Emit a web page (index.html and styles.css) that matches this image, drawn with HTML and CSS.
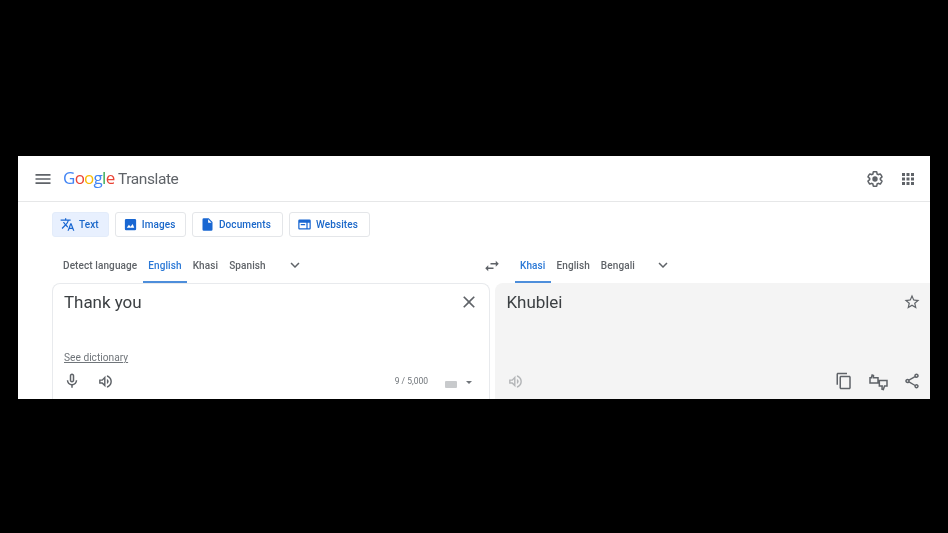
FILE: index.html
```html
<!DOCTYPE html>
<html lang="en">
<head>
<meta charset="utf-8">
<title>Google Translate</title>
<link rel="stylesheet" href="styles.css">
</head>
<body>
<main class="app">
  <header class="topbar">
    <svg class="ico menu" viewBox="0 0 24 24"><path d="M3 18h18v-2H3v2zm0-5h18v-2H3v2zm0-7v2h18V6H3z"/></svg>
    <div class="logo"><span class="g-blue">G</span><span class="g-red">o</span><span class="g-yellow">o</span><span class="g-blue">g</span><span class="g-green">l</span><span class="g-red">e</span><span class="product">Translate</span></div>
    <div class="top-actions">
      <svg class="ico gear" viewBox="0 0 24 24"><path class="gear-line" d="M19.14 12.94c.04-.3.06-.61.06-.94 0-.32-.02-.64-.07-.94l2.03-1.58c.18-.14.23-.41.12-.61l-1.92-3.32c-.12-.22-.37-.29-.59-.22l-2.39.96c-.5-.38-1.03-.7-1.62-.94l-.36-2.54c-.04-.24-.24-.41-.48-.41h-3.84c-.24 0-.43.17-.47.41l-.36 2.54c-.59.24-1.13.57-1.62.94l-2.39-.96c-.22-.08-.47 0-.59.22L2.74 8.870c-.12.21-.08.47.12.61l2.03 1.58c-.05.3-.09.63-.09.94s.02.64.07.94l-2.03 1.58c-.18.14-.23.41-.12.61l1.92 3.32c.12.22.37.29.59.22l2.39-.96c.5.38 1.03.7 1.62.94l.36 2.54c.05.24.24.41.48.41h3.84c.24 0 .44-.17.47-.41l.36-2.54c.59-.24 1.13-.56 1.62-.94l2.39.96c.22.08.47 0 .59-.22l1.92-3.32c.12-.22.07-.47-.12-.61l-2.010-1.58z"/><circle cx="12" cy="12" r="3.6"/></svg>
      <svg class="ico apps" viewBox="0 0 24 24"><path d="M4 8h4V4H4v4zm6 12h4v-4h-4v4zm-6 0h4v-4H4v4zm0-6h4v-4H4v4zm6 0h4v-4h-4v4zm6-10v4h4V4h-4zm-6 4h4V4h-4v4zm6 6h4v-4h-4v4zm0 6h4v-4h-4v4z"/></svg>
    </div>
  </header>

  <nav class="tabs">
    <button class="tab tab-active">
      <svg class="tab-ico" viewBox="0 0 24 24"><path d="M12.87 15.07l-2.54-2.51.03-.03c1.74-1.94 2.98-4.17 3.71-6.53H17V4h-7V2H8v2H1v1.99h11.17C11.5 7.92 10.44 9.75 9 11.35 8.07 10.32 7.3 9.19 6.69 8h-2c.73 1.63 1.73 3.17 2.98 4.56l-5.09 5.02L4 19l5-5 3.11 3.11.76-2.04zM18.5 10h-2L12 22h2l1.12-3h4.75L21 22h2l-4.5-12zm-2.62 7l1.62-4.33L19.12 17h-3.24z"/></svg>Text</button>
    <button class="tab">
      <svg class="tab-ico" viewBox="0 0 24 24"><path d="M19 3H5a2 2 0 0 0-2 2v14a2 2 0 0 0 2 2h14a2 2 0 0 0 2-2V5a2 2 0 0 0-2-2zM6 17l3.5-4.5 2.5 3 3.5-4.5 2.5 6H6z"/></svg>Images</button>
    <button class="tab tab-wide">
      <svg class="tab-ico" viewBox="0 0 24 24"><path d="M14 2H6a2 2 0 0 0-2 2v16a2 2 0 0 0 2 2h12a2 2 0 0 0 2-2V8l-6-6zm-1 7V3.500L18.500 9H13z"/></svg>Documents</button>
    <button class="tab tab-wide">
      <svg class="tab-ico" viewBox="0 0 24 24"><path d="M20 4H4a2 2 0 0 0-2 2v12a2 2 0 0 0 2 2h16a2 2 0 0 0 2-2V6a2 2 0 0 0-2-2zM4 18V9h11v9H4zm16 0h-3V9h3v9zM6 11h7v2H6z"/></svg>Websites</button>
  </nav>

  <section class="workspace">
    <div class="column col-source">
      <div class="langs">
        <span class="lang">Detect language</span>
        <span class="lang lang-active">English</span>
        <span class="lang">Khasi</span>
        <span class="lang">Spanish</span>
        <svg class="ico chev" viewBox="0 0 24 24"><path d="M7.41 8.59L12 13.17l4.59-4.58L18 10l-6 6-6-6z"/></svg>
      </div>
      <div class="panel panel-source">
        <div class="panel-top">
          <span class="big-text">Thank you</span>
          <svg class="ico close" viewBox="0 0 24 24"><path d="M19 6.41L17.59 5 12 10.59 6.41 5 5 6.41 10.59 12 5 17.59 6.41 19 12 13.41 17.59 19 19 17.59 13.41 12z"/></svg>
        </div>
        <a class="dict">See dictionary</a>
        <div class="panel-bottom">
          <svg class="ico mic" viewBox="0 0 24 24"><path d="M12 14c1.66 0 3-1.34 3-3V5c0-1.66-1.34-3-3-3S9 3.34 9 5v6c0 1.66 1.34 3 3 3zm-1-9c0-.55.45-1 1-1s1 .45 1 1v6c0 .55-.45 1-1 1s-1-.45-1-1V5zm6 6c0 2.76-2.24 5-5 5s-5-2.24-5-5H5c0 3.53 2.61 6.43 6 6.92V21h2v-3.08c3.39-.49 6-3.39 6-6.92h-2z"/></svg>
          <svg class="ico spk" viewBox="0 0 24 24"><path d="M3 9v6h4l5 5V4L7 9H3zm7-.17v6.34L7.83 13H5v-2h2.83L10 8.83zM14 8.500v7c1.48-.74 2.500-2.250 2.500-3.500S15.480 9.240 14 8.500zM14 3.230v2.060c2.890.86 5 3.540 5 6.710s-2.110 5.850-5 6.710v2.060c4-.91 7-4.490 7-8.770s-3-7.860-7-8.770z"/></svg>
          <span class="count">9 / 5,000</span>
          <span class="kbd"></span>
          <span class="caret"></span>
        </div>
      </div>
    </div>
    <div class="swap-col">
      <svg class="ico swap" viewBox="0 0 24 24"><path d="M6.99 11L3 15l3.99 4v-3H14v-2H6.99v-3zM21 9l-3.99-4v3H10v2h7.010v3L21 9z"/></svg>
    </div>
    <div class="column col-target">
      <div class="langs langs-target">
        <span class="lang lang-active">Khasi</span>
        <span class="lang">English</span>
        <span class="lang">Bengali</span>
        <svg class="ico chev" viewBox="0 0 24 24"><path d="M7.41 8.59L12 13.17l4.59-4.58L18 10l-6 6-6-6z"/></svg>
      </div>
      <div class="panel panel-target">
        <div class="panel-top">
          <span class="big-text">Khublei</span>
          <svg class="ico star" viewBox="0 0 24 24"><path d="M22 9.24l-7.19-.62L12 2 9.19 8.63 2 9.24l5.46 4.73L5.82 21 12 17.27 18.18 21l-1.63-7.03L22 9.24zM12 15.4l-3.76 2.27 1-4.28-3.32-2.88 4.38-.38L12 6.1l1.71 4.04 4.38.38-3.32 2.88 1 4.28L12 15.4z"/></svg>
        </div>
        <div class="panel-bottom bottom-target">
          <svg class="ico spk spk-off" viewBox="0 0 24 24"><path d="M3 9v6h4l5 5V4L7 9H3zm7-.17v6.34L7.83 13H5v-2h2.83L10 8.83zM14 8.500v7c1.48-.74 2.500-2.250 2.500-3.500S15.480 9.240 14 8.500zM14 3.230v2.060c2.890.86 5 3.540 5 6.710s-2.110 5.850-5 6.710v2.060c4-.91 7-4.490 7-8.770s-3-7.860-7-8.770z"/></svg>
          <svg class="ico copy" viewBox="0 0 24 24"><path d="M16 1H4c-1.100 0-2 .9-2 2v14h2V3h12V1zm3 4H8c-1.100 0-2 .9-2 2v14c0 1.100.9 2 2 2h11c1.100 0 2-.9 2-2V7c0-1.100-.9-2-2-2zm0 16H8V7h11v14z"/></svg>
          <svg class="ico thumbs" viewBox="0 0 24 24"><path class="thumb-line" d="M2.400 8H4l1-3.200 1.600.5-.2 2.700h5.600v6.500H2.400zM22.800 18h-3l-1.400 4.300-1.600-.5.2-3.800h-3.400v-6.500h9.200z"/></svg>
          <svg class="ico share" viewBox="0 0 24 24"><path d="M18 16.080c-.76 0-1.440.3-1.960.77L8.910 12.700c.05-.23.090-.46.090-.7s-.04-.47-.09-.7l7.050-4.110c.54.5 1.250.81 2.040.81 1.660 0 3-1.340 3-3s-1.340-3-3-3-3 1.340-3 3c0 .24.040.47.090.7L8.040 9.810C7.500 9.310 6.790 9 6 9c-1.660 0-3 1.340-3 3s1.340 3 3 3c.79 0 1.500-.31 2.040-.81l7.120 4.160c-.05.21-.08.43-.08.65 0 1.610 1.310 2.920 2.920 2.920s2.920-1.310 2.920-2.920-1.310-2.920-2.920-2.920zM18 4a1 1 0 1 1 0 2 1 1 0 0 1 0-2zM6 13a1 1 0 1 1 0-2 1 1 0 0 1 0 2zm12 7a1 1 0 1 1 0-2 1 1 0 0 1 0 2z"/></svg>
        </div>
      </div>
    </div>
  </section>
</main>
</body>
</html>
```
FILE: styles.css
```css
* { box-sizing: border-box; }
html, body { margin: 0; height: 100%; background: #000; }
body { padding: 156px 18px 0; overflow: hidden; font-family: Roboto, "Liberation Sans", sans-serif; }
.app { width: 912px; height: 243px; background: #fff; overflow: hidden; filter: blur(.35px); }
.ico { display: block; width: 24px; height: 24px; fill: #5f6368; flex: none; }

.topbar { display: flex; align-items: center; height: 46px; padding: 0 13px 0 15px; border-bottom: 1px solid #e6e7e8; }
.menu { width: 20px; height: 20px; }
.logo { margin-left: 10px; font-family: "Open Sans", sans-serif; font-size: 17px; letter-spacing: -.75px; line-height: 24px; }
.g-blue { color: #4285f4; } .g-red { color: #ea4335; } .g-yellow { color: #fbbc05; } .g-green { color: #34a853; }
.product { margin-left: 3.5px; font-family: Roboto, sans-serif; font-size: 15.5px; color: #5f6368; letter-spacing: -.4px; }
.top-actions { margin-left: auto; display: flex; gap: 15px; align-items: center; }
.gear { width: 18px; height: 18px; }
.gear-line { fill: none; stroke: #5f6368; stroke-width: 2; }
.apps { width: 18px; height: 18px; }

.tabs { display: flex; gap: 6px; padding: 10px 0 0 34px; }
.tab { display: flex; align-items: center; height: 25px; padding: 0 9.5px 0 7px; gap: 4px; border: 1px solid #e4e6e9; border-radius: 3px; background: #fff; color: #1a67c9; font: 500 10px Roboto, sans-serif; letter-spacing: .1px; }
.tab-active { background: #e8f0fe; border-color: #e3ecfa; padding-right: 9px; }
.tab-wide { padding-right: 11px; }
.tab-ico { width: 15px; height: 15px; fill: #1967d2; }

.workspace { display: flex; }
.column { display: flex; flex-direction: column; }
.col-source { width: 472px; padding-left: 34px; }
.swap-col { width: 5px; position: relative; }
.col-target { flex: 1; min-width: 0; }

.langs { display: flex; align-items: stretch; height: 31px; margin-top: 15px; padding-left: 5.5px; font-size: 10px; font-weight: 500; color: #5f6368; letter-spacing: .1px; }
.lang { display: flex; align-items: center; padding: 0 5.5px 5px; height: 31px; }
.lang-active { color: #2a78d6; box-shadow: inset 0 -2px 0 #4d8edb; }
.chev { width: 18px; height: 18px; margin: 4px 0 0 14.5px; }
.langs-target { padding-left: 19.5px; }
.langs-target .chev { margin-left: 13.5px; }

.swap { position: absolute; left: -7px; top: 20px; width: 18px; height: 18px; }
.panel { height: 116px; display: flex; flex-direction: column; }
.panel-source { background: #fff; border: 1px solid #e8eaed; border-bottom: 0; border-radius: 8px 8px 0 0; padding: 6px 12px 0 11px; }
.panel-target { background: #f4f4f4; border-radius: 8px 0 0 0; padding: 7px 9px 0 11.5px; }
.panel-top { display: flex; justify-content: space-between; align-items: center; height: 24px; }
.big-text { font-size: 17px; line-height: 24px; color: #3c4043; letter-spacing: -.05px; }
.close { width: 20px; height: 20px; margin-right: -2px; }
.star { width: 18px; height: 18px; }
.dict { margin-top: 37px; font-size: 10.2px; line-height: 14px; color: #70757a; text-decoration: underline; align-self: flex-start; }
.panel-bottom { display: flex; align-items: center; height: 20px; margin-top: 6px; }
.mic { width: 18px; height: 18px; margin-left: -1px; }
.spk { width: 17px; height: 17px; margin-left: 16px; }
.count { margin-left: auto; font-size: 8.5px; color: #70757a; }
.kbd { width: 12px; height: 7px; margin: 6px 0 0 17px; background: #c8cacc; border-radius: 1px; }
.caret { margin: 3px 5px 0 9px; border: 3px solid transparent; border-top-color: #70757a; border-bottom: 0; }

.bottom-target { margin-top: 57px; }
.spk-off { margin-left: 0; fill: #b4b6b8; }
.copy { width: 18px; height: 18px; margin-left: auto; }
.thumbs { width: 20px; height: 20px; margin-left: 15px; fill: none; }
.thumb-line { fill: none; stroke: #5f6368; stroke-width: 1.800; }
.share { width: 18px; height: 18px; margin-left: 15px; }
```
